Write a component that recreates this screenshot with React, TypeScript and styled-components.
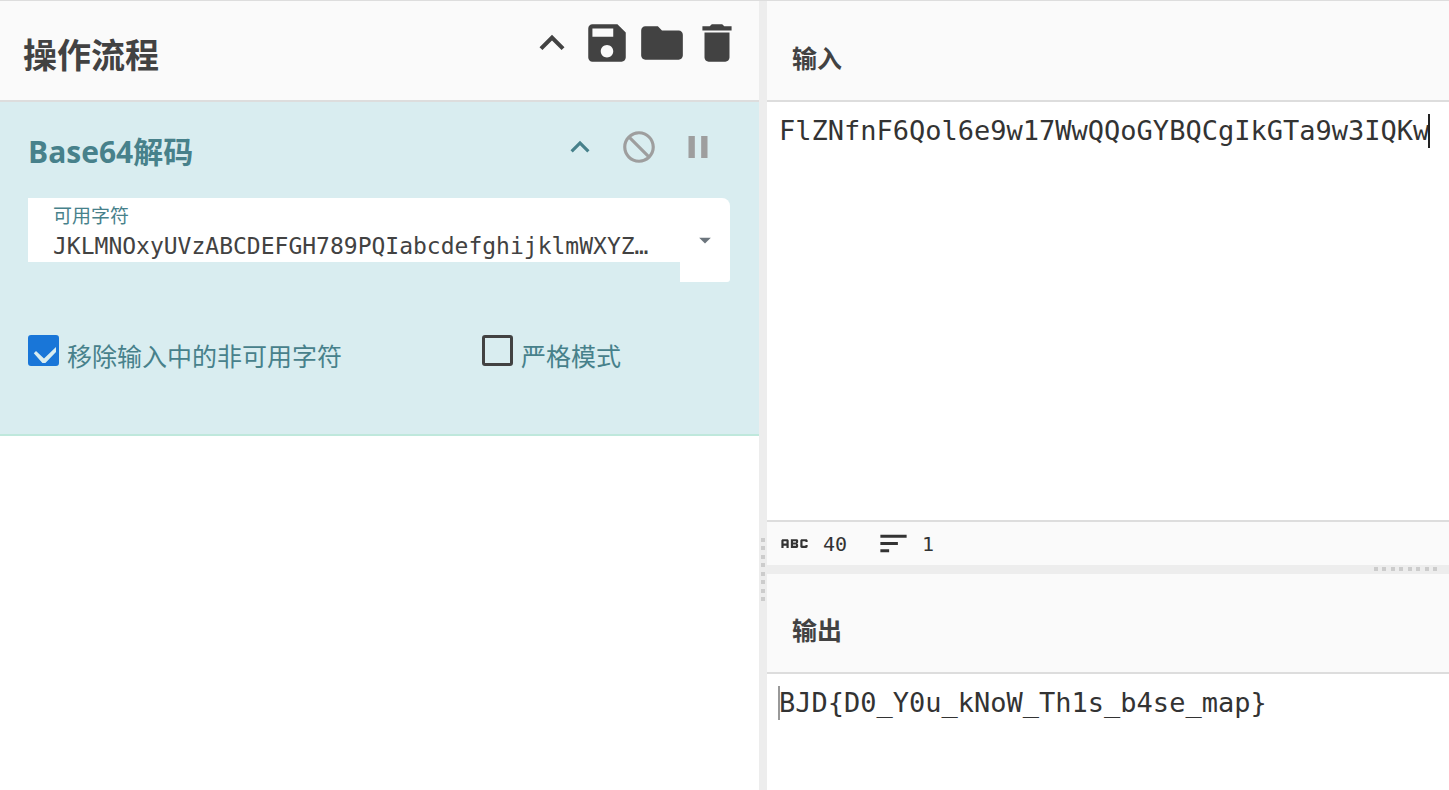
import React from "react";
import styled, { createGlobalStyle } from "styled-components";
import {
  MdAbc,
  MdArrowDropDown,
  MdDelete,
  MdFolder,
  MdKeyboardArrowUp,
  MdNotInterested,
  MdPause,
  MdSave,
  MdSort,
} from "react-icons/md";

const sans = `"Open Sans", "Noto Sans CJK SC", sans-serif`;
const mono = `"DejaVu Sans Mono", "Noto Sans CJK SC", monospace`;

const GlobalStyle = createGlobalStyle`
  *, *::before, *::after { box-sizing: border-box; }
  body { margin: 0; background: #fff; color: #424242; font-family: ${sans}; }
  button, input, textarea { font: inherit; color: inherit; margin: 0; padding: 0; border: 0; outline: 0; }
  h1, h2 { margin: 0; }
`;

const Page = styled.main`
  display: flex;
  min-height: 100vh;
  border-top: 1px solid #ddd;
`;

const Column = styled.section<{ $share: number }>`
  flex: ${(p) => p.$share} 1 0;
  min-width: 0;
  display: flex;
  flex-direction: column;
`;

const TitleBar = styled.header<{ $height?: number }>`
  flex: none;
  display: flex;
  align-items: flex-start;
  justify-content: space-between;
  min-height: ${(p) => p.$height ?? 101}px;
  background: #fafafa;
  border-bottom: 2px solid #ddd;
`;

const RecipeTitle = styled.h1`
  padding: 29px 0 0 23px;
  font-size: 34px;
  line-height: 50px;
  font-weight: 700;
`;

const PaneTitle = styled.h2`
  align-self: flex-end;
  padding: 0 0 23px 25px;
  font-size: 25px;
  line-height: 38px;
  font-weight: 700;
`;

const Tools = styled.div<{ $gap: number }>`
  display: flex;
  gap: ${(p) => p.$gap}px;
`;

const RecipeTools = styled(Tools)`
  padding: 17px 17px 0 0;
`;

const IconButton = styled.button<{ $size: number; $color?: string }>`
  display: flex;
  background: none;
  cursor: pointer;
  color: ${(p) => p.$color ?? "#424242"};
  svg {
    width: ${(p) => p.$size}px;
    height: ${(p) => p.$size}px;
  }
`;

const Operation = styled.article`
  padding: 26px 29px 59px 28px;
  background: #d9edf0;
  border-bottom: 2px solid #bfe8dc;
  color: #47818b;
`;

const OperationHead = styled.div`
  display: flex;
  justify-content: space-between;
  padding-right: 13px;
`;

const OperationTitle = styled.h2`
  padding: 3px 0 1px;
  font-size: 30px;
  line-height: 42px;
  font-weight: 700;
`;

const Field = styled.div`
  display: flex;
  align-items: flex-start;
  margin-top: 24px;
`;

const FieldBody = styled.div`
  flex: 1;
  min-width: 0;
  height: 64px;
  padding: 4px 0 0 25px;
  background: #fff;
`;

const FieldLabel = styled.label`
  display: block;
  font-size: 19px;
  line-height: 28px;
`;

const FieldInput = styled.input`
  display: block;
  width: 100%;
  height: 32px;
  background: none;
  color: #424242;
  font-family: ${mono};
  font-size: 23px;
`;

const FieldToggle = styled.button`
  display: grid;
  place-items: center;
  width: 50px;
  height: 84px;
  background: #fff;
  border-radius: 0 8px 3px 0;
  color: #6c757d;
  cursor: pointer;
  svg {
    width: 28px;
    height: 28px;
  }
`;

const Options = styled.div`
  display: grid;
  grid-template-columns: 454fr 248fr;
  margin-top: 53px;
`;

const Option = styled.label`
  display: flex;
  align-items: flex-start;
  gap: 8px;
  font-size: 25px;
  line-height: 38px;
`;

const OptionText = styled.span`
  padding-top: 2px;
`;

const Tick = styled.span`
  position: relative;
  display: flex;
  width: 31px;
  height: 31px;
  svg {
    position: absolute;
    inset: 0;
    visibility: hidden;
    pointer-events: none;
  }
  input:checked + svg {
    visibility: visible;
  }
`;

const TickInput = styled.input`
  appearance: none;
  width: 31px;
  height: 31px;
  border: 3px solid #424242;
  border-radius: 3px;
  &:checked {
    border-color: #1976d8;
    background: #1976d8;
  }
`;

const VerticalGutter = styled.div`
  flex: none;
  width: 8px;
  display: flex;
  flex-direction: column;
  align-items: center;
  background: #ededed;
`;

const Spacer = styled.div<{ $share: number }>`
  flex: ${(p) => p.$share} 1 0;
`;

const HorizontalGutter = styled.div`
  flex: none;
  height: 9px;
  display: flex;
  justify-content: flex-end;
  padding: 2px 12px 0 0;
  background: #ededed;
`;

const Grip = styled.div<{ $vertical?: boolean }>`
  display: flex;
  flex-direction: ${(p) => (p.$vertical ? "column" : "row")};
  justify-content: space-between;
  width: ${(p) => (p.$vertical ? 4 : 63)}px;
  height: ${(p) => (p.$vertical ? 63 : 4)}px;
`;

const GripDot = styled.i`
  width: 4px;
  height: 4px;
  background: #ccc;
`;

const Editor = styled.div<{ $share: number }>`
  position: relative;
  flex: ${(p) => p.$share} 1 0;
  min-height: 60px;
  display: flex;
  color: #333;
  font-family: ${mono};
  font-size: 27px;
  line-height: 34px;
`;

const EditorText = styled.textarea`
  flex: 1;
  min-width: 0;
  padding: 12px 0 0 12px;
  resize: none;
  background: #fff;
  white-space: pre;
  overflow: hidden;
`;

const Caret = styled.span<{ $column: number; $color: string }>`
  position: absolute;
  top: 12px;
  left: calc(11px + ${(p) => p.$column}ch);
  width: 2px;
  height: 34px;
  background: ${(p) => p.$color};
`;

const StatusBar = styled.footer`
  flex: none;
  display: flex;
  align-items: center;
  gap: 29px;
  height: 45px;
  padding-left: 10px;
  background: #fafafa;
  border-top: 2px solid #ddd;
  color: #333;
  font-family: ${mono};
  font-size: 20px;
`;

const Stat = styled.span`
  display: flex;
  align-items: center;
  gap: 11px;
  svg {
    width: 35px;
    height: 35px;
  }
`;

const Dots = ({ vertical }: { vertical?: boolean }) => (
  <Grip $vertical={vertical}>
    {Array.from({ length: 8 }, (_, i) => (
      <GripDot key={i} />
    ))}
  </Grip>
);

const TickOption = ({ text, checked }: { text: string; checked?: boolean }) => (
  <Option>
    <Tick>
      <TickInput type="checkbox" defaultChecked={checked} />
      <svg viewBox="0 0 31 31" width="31" height="31" aria-hidden="true">
        <path d="M5.8 18.2 8 16l8 7.6L28 12v5L17.4 28h-3z" fill="#d9edf0" />
      </svg>
    </Tick>
    <OptionText>{text}</OptionText>
  </Option>
);

const inputText = "FlZNfnF6Qol6e9w17WwQQoGYBQCgIkGTa9w3IQKw";
const outputText = "BJD{D0_Y0u_kNoW_Th1s_b4se_map}";

export default function App() {
  return (
    <>
      <GlobalStyle />
      <Page>
        <Column $share={759}>
          <TitleBar>
            <RecipeTitle>操作流程</RecipeTitle>
            <RecipeTools $gap={5}>
              <IconButton $size={50} aria-label="收起"><MdKeyboardArrowUp /></IconButton>
              <IconButton $size={50} aria-label="保存"><MdSave /></IconButton>
              <IconButton $size={50} aria-label="打开"><MdFolder /></IconButton>
              <IconButton $size={50} aria-label="清空"><MdDelete /></IconButton>
            </RecipeTools>
          </TitleBar>
          <Operation>
            <OperationHead>
              <OperationTitle>Base64解码</OperationTitle>
              <Tools $gap={21}>
                <IconButton $size={38} $color="#47818b" aria-label="收起"><MdKeyboardArrowUp /></IconButton>
                <IconButton $size={38} $color="#9e9e9e" aria-label="禁用"><MdNotInterested /></IconButton>
                <IconButton $size={38} $color="#9e9e9e" aria-label="暂停"><MdPause /></IconButton>
              </Tools>
            </OperationHead>
            <Field>
              <FieldBody>
                <FieldLabel htmlFor="alphabet">可用字符</FieldLabel>
                <FieldInput
                  id="alphabet"
                  type="text"
                  spellCheck={false}
                  defaultValue="JKLMNOxyUVzABCDEFGH789PQIabcdefghijklmWXYZ…"
                />
              </FieldBody>
              <FieldToggle aria-label="选择可用字符"><MdArrowDropDown /></FieldToggle>
            </Field>
            <Options>
              <TickOption text="移除输入中的非可用字符" checked />
              <TickOption text="严格模式" />
            </Options>
          </Operation>
        </Column>

        <VerticalGutter>
          <Spacer $share={537} />
          <Dots vertical />
          <Spacer $share={189} />
        </VerticalGutter>

        <Column $share={682}>
          <TitleBar>
            <PaneTitle>输入</PaneTitle>
          </TitleBar>
          <Editor $share={418}>
            <EditorText aria-label="输入" spellCheck={false} defaultValue={inputText} />
            <Caret $column={inputText.length} $color="#222" />
          </Editor>
          <StatusBar>
            <Stat><MdAbc />40</Stat>
            <Stat><MdSort />1</Stat>
          </StatusBar>
          <HorizontalGutter>
            <Dots />
          </HorizontalGutter>
          <TitleBar $height={100}>
            <PaneTitle>输出</PaneTitle>
          </TitleBar>
          <Editor $share={116}>
            <EditorText aria-label="输出" readOnly spellCheck={false} value={outputText} />
            <Caret $column={0} $color="#999" />
          </Editor>
        </Column>
      </Page>
    </>
  );
}
